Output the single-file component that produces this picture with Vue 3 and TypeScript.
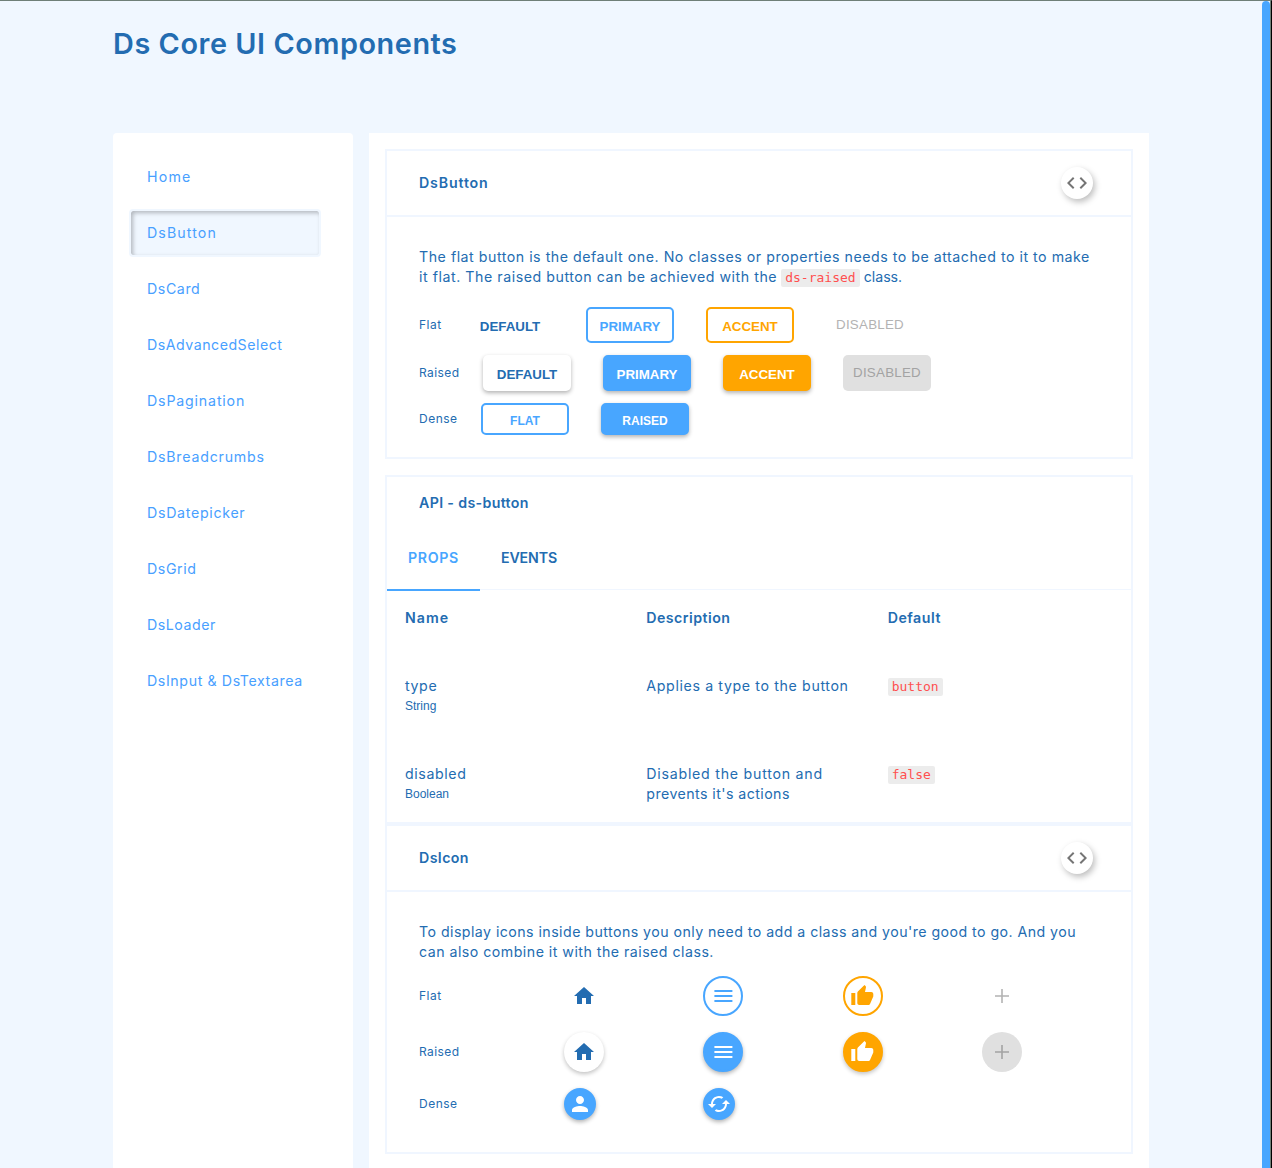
<script setup lang="ts">
interface ButtonSpec { label: string; kind: string }
interface ButtonRow { name: string; mode: string; buttons: ButtonSpec[] }
interface IconSpec { icon: string; kind: string }
interface IconRow { name: string; mode: string; items: IconSpec[] }

const nav: { label: string; cls: string }[] = [
  { label: 'Home', cls: 'n1' },
  { label: 'DsButton', cls: 'n2 active' },
  { label: 'DsCard', cls: 'n3' },
  { label: 'DsAdvancedSelect', cls: 'n4' },
  { label: 'DsPagination', cls: 'n5' },
  { label: 'DsBreadcrumbs', cls: 'n6' },
  { label: 'DsDatepicker', cls: 'n7' },
  { label: 'DsGrid', cls: 'n8' },
  { label: 'DsLoader', cls: 'n9' },
  { label: 'DsInput & DsTextarea', cls: 'n10' },
]

const buttonRows: ButtonRow[] = [
  {
    name: 'Flat', mode: 'flat',
    buttons: [
      { label: 'Default', kind: 'default' },
      { label: 'Primary', kind: 'primary' },
      { label: 'Accent', kind: 'accent' },
      { label: 'Disabled', kind: 'disabled' },
    ],
  },
  {
    name: 'Raised', mode: 'raised',
    buttons: [
      { label: 'Default', kind: 'default' },
      { label: 'Primary', kind: 'primary' },
      { label: 'Accent', kind: 'accent' },
      { label: 'Disabled', kind: 'disabled' },
    ],
  },
  {
    name: 'Dense', mode: 'dense',
    buttons: [
      { label: 'Flat', kind: 'primary flat' },
      { label: 'Raised', kind: 'primary raised' },
    ],
  },
]

const icons: Record<string, string> = {
  code: 'M9.4 16.6L4.8 12l4.6-4.6L8 6l-6 6 6 6 1.4-1.4zm5.2 0l4.6-4.6-4.6-4.6L16 6l6 6-6 6-1.4-1.4z',
  home: 'M10 20v-6h4v6h5v-8h3L12 3 2 12h3v8z',
  menu: 'M3 18h18v-2H3v2zm0-5h18v-2H3v2zm0-7v2h18V6H3z',
  thumb: 'M1 21h4V9H1v12zm22-11c0-1.1-.9-2-2-2h-6.31l.95-4.57.03-.32c0-.41-.17-.79-.44-1.06L14.17 1 7.59 7.59C7.22 7.95 7 8.45 7 9v10c0 1.1.9 2 2 2h9c.83 0 1.54-.5 1.84-1.22l3.02-7.05c.09-.23.14-.47.14-.73v-2z',
  add: 'M19 12.8h-6.2V19h-1.6v-6.2H5v-1.6h6.2V5h1.6v6.2H19z',
  person: 'M12 12c2.21 0 4-1.79 4-4s-1.79-4-4-4-4 1.79-4 4 1.79 4 4 4zm0 2c-2.67 0-8 1.34-8 4v2h16v-2c0-2.66-5.33-4-8-4z',
  cached: 'M19 8l-4 4h3c0 3.31-2.69 6-6 6-1.01 0-1.97-.25-2.8-.7l-1.46 1.46C8.97 19.54 10.43 20 12 20c4.42 0 8-3.58 8-8h3l-4-4zM6 12c0-3.31 2.69-6 6-6 1.01 0 1.97.25 2.8.7l1.46-1.46C15.03 4.46 13.57 4 12 4c-4.42 0-8 3.58-8 8H1l4 4 4-4H6z',
}

const iconRows: IconRow[] = [
  {
    name: 'Flat', mode: 'flat',
    items: [
      { icon: 'home', kind: 'default' },
      { icon: 'menu', kind: 'primary' },
      { icon: 'thumb', kind: 'accent' },
      { icon: 'add', kind: 'disabled' },
    ],
  },
  {
    name: 'Raised', mode: 'raised',
    items: [
      { icon: 'home', kind: 'default' },
      { icon: 'menu', kind: 'primary' },
      { icon: 'thumb', kind: 'accent' },
      { icon: 'add', kind: 'disabled' },
    ],
  },
  {
    name: 'Dense', mode: 'dense',
    items: [
      { icon: 'person', kind: 'primary raised' },
      { icon: 'cached', kind: 'primary raised' },
    ],
  },
]
</script>

<template>
  <div class="page">
    <div class="view">
      <h1><span>Ds Core UI Components</span></h1>
      <div class="columns">
        <nav class="sidebar">
          <a v-for="n in nav" :key="n.label" class="nav-item" :class="n.cls">{{ n.label }}</a>
        </nav>
        <main class="content">
          <section class="card">
            <header class="card-head">
              <h2 class="h-button">DsButton</h2>
              <button class="code-btn"><svg viewBox="0 0 24 24"><path :d="icons.code" /></svg></button>
            </header>
            <div class="card-body">
              <p>
                <span class="l1">The flat button is the default one. No classes or properties needs to be attached to it to make</span><br>
                <span class="l2">it flat. The raised button can be achieved with the</span> <code>ds-raised</code> <span class="l2b">class.</span>
              </p>
              <div v-for="r in buttonRows" :key="r.name" class="btn-row" :class="r.mode">
                <span class="row-label">{{ r.name }}</span>
                <button v-for="b in r.buttons" :key="b.label" class="btn" :class="b.kind">{{ b.label }}</button>
              </div>
            </div>
          </section>

          <section class="card api">
            <h2 class="h-api">API - ds-button</h2>
            <div class="tabs">
              <div class="tab on"><span>PROPS</span></div>
              <div class="tab t-events"><span>EVENTS</span></div>
            </div>
            <div class="table">
              <div class="tr th">
                <div><span class="h-name">Name</span></div>
                <div><span class="h-desc">Description</span></div>
                <div><span class="h-def">Default</span></div>
              </div>
              <div class="tr">
                <div><span class="c-type">type</span><small>String</small></div>
                <div><span class="c-applies">Applies a type to the button</span></div>
                <div><code>button</code></div>
              </div>
              <div class="tr">
                <div><span class="c-dis">disabled</span><small>Boolean</small></div>
                <div><span class="c-d1">Disabled the button and</span><br><span class="c-d2">prevents it's actions</span></div>
                <div><code>false</code></div>
              </div>
            </div>
          </section>

          <section class="card">
            <header class="card-head">
              <h2 class="h-icon">DsIcon</h2>
              <button class="code-btn"><svg viewBox="0 0 24 24"><path :d="icons.code" /></svg></button>
            </header>
            <div class="card-body icons-body">
              <p>
                <span class="l3">To display icons inside buttons you only need to add a class and you're good to go. And you</span><br>
                <span class="l4">can also combine it with the raised class.</span>
              </p>
              <div v-for="r in iconRows" :key="r.name" class="icon-row" :class="r.mode">
                <span class="row-label">{{ r.name }}</span>
                <div v-for="i in r.items" :key="i.icon" class="cell">
                  <button class="ibtn" :class="i.kind">
                    <svg viewBox="0 0 24 24" :class="'i-' + i.icon"><path :d="icons[i.icon]" /></svg>
                  </button>
                </div>
              </div>
            </div>
          </section>
        </main>
      </div>
    </div>
    <div class="scrollbar"><div class="thumb"></div></div>
  </div>
</template>

<style>
body { margin: 0; overflow: hidden; }
</style>

<style scoped>
* { box-sizing: border-box; }
.page {
  display: flex;
  width: 1272px;
  height: 1168px;
  overflow: hidden;
  background: #f0f7ff;
  border-top: 1px solid #6f7f78;
  border-right: 1px solid #000;
  font-family: Inter, "Open Sans", sans-serif;
  font-size: 14.2px;
  line-height: 20px;
  color: #236cb1;
}
.view { width: 1262px; padding: 0 113px; flex: none; }
.scrollbar { width: 9px; flex: none; border-right: 1px solid #6f7f78; }
.thumb { height: 1180px; border-radius: 4px; background: #48a6ff; }
h1 {
  margin: 0;
  height: 132px;
  padding-top: 22px;
  font-size: 28.8px;
  line-height: 41px;
  font-weight: 600;
  letter-spacing: .58px;
  white-space: nowrap;
}
.columns { display: flex; gap: 16px; height: 1035px; }
.sidebar {
  flex: none;
  width: 240px;
  padding: 20px 16px;
  background: #fff;
  border-radius: 4px 4px 0 0;
  display: flex;
  flex-direction: column;
  gap: 8px;
}
.nav-item {
  width: 192px;
  height: 48px;
  flex: none;
  padding: 0 16px;
  border: 2px solid transparent;
  border-radius: 4px;
  line-height: 44px;
  color: #48a0ff;
  white-space: nowrap;
}
.nav-item.active {
  background: #f0f7ff;
  border-color: #f0f7ff;
  box-shadow: inset 2px 2px 4px rgba(0, 0, 0, .26);
}
.n1 { letter-spacing: 1.2px; }
.n2 { letter-spacing: 1.1px; }
.n3 { letter-spacing: .58px; }
.n4 { letter-spacing: .5px; }
.n5 { letter-spacing: .83px; }
.n6 { letter-spacing: .78px; }
.n7 { letter-spacing: .7px; }
.n8 { letter-spacing: .6px; }
.n9 { letter-spacing: .54px; }
.n10 { letter-spacing: .61px; }
.h-button { letter-spacing: .85px; }
.h-api { letter-spacing: .34px; }
.h-icon { letter-spacing: .4px; }
.h-name { letter-spacing: 1px; }
.h-desc { letter-spacing: .45px; }
.h-def { letter-spacing: .52px; }
.l1 { letter-spacing: .52px; }
.l2 { letter-spacing: .54px; }
.l2b { letter-spacing: 0; }
.l3 { letter-spacing: .445px; }
.l4 { letter-spacing: .475px; }
.c-type { letter-spacing: .6px; }
.c-dis { letter-spacing: .6px; }
.c-applies { letter-spacing: .63px; }
.c-d1 { letter-spacing: .75px; }
.c-d2 { letter-spacing: .43px; }

.content { flex: none; width: 780px; padding: 16px; background: #fff; }
.card { border: 2px solid #f0f6ff; background: #fff; }
.card h2 { margin: 0; font-size: 14.2px; line-height: 20px; font-weight: 600; white-space: nowrap; }
.card-head {
  height: 66px;
  padding: 0 38px 0 32px;
  border-bottom: 2px solid #f0f6ff;
  display: flex;
  align-items: center;
  justify-content: space-between;
}
.code-btn {
  width: 32px;
  height: 32px;
  padding: 4px;
  border: 0;
  border-radius: 50%;
  background: #fff;
  box-shadow: 2px 3px 6px rgba(0, 0, 0, .26);
  fill: #757575;
}
svg { display: block; width: 24px; height: 24px; }
.card-body { padding: 30px 32px 22px; }
p { margin: 0 0 20px; white-space: nowrap; }
code {
  padding: 1px 4px 2px;
  border-radius: 2px;
  background: #ececec;
  color: #ff4f4f;
  font: 13px/15px "DejaVu Sans Mono", monospace;
}
.btn-row { display: flex; height: 36px; margin-bottom: 12px; align-items: center; }
.btn-row.dense { height: 32px; margin-bottom: 0; }
.row-label { flex: none; font-size: 12px; line-height: 20px; }
.flat .row-label { width: 47px; letter-spacing: .5px; }
.raised .row-label { width: 64px; letter-spacing: .4px; }
.dense .row-label { width: 62px; letter-spacing: .5px; }
.btn {
  width: 88px;
  height: 36px;
  margin-right: 32px;
  padding: 2px 0 0;
  border: 2px solid transparent;
  border-radius: 5px;
  background: none;
  font: bold 13.33px/32px "Liberation Sans", sans-serif;
  text-transform: uppercase;
  color: #236cb1;
}
.btn.primary { color: #48a6ff; border-color: #48a6ff; }
.btn.accent { color: #ffa500; border-color: #ffa500; }
.btn.disabled { font-weight: normal; color: #b3b3b3; padding: 0; line-height: 30px; letter-spacing: .25px; }
.raised .btn { box-shadow: 0 2px 4px rgba(0, 0, 0, .3); }
.raised .btn.primary, .btn.raised { background: #48a6ff; color: #fff; box-shadow: 0 2px 4px rgba(0, 0, 0, .3); }
.raised .btn.accent { background: #ffa500; color: #fff; }
.raised .btn.disabled { background: #e0e0e0; color: #a3a3a3; box-shadow: none; }
.dense .btn { height: 32px; font-size: 12px; line-height: 26px; padding-top: 3px; }

.api { margin-top: 16px; height: 349px; padding-top: 16px; }
.api h2 { margin-left: 32px; }
.tabs { display: flex; height: 78px; padding-top: 12px; }
.tab {
  width: 93px;
  border-bottom: 1px solid #f0f6ff;
  padding-left: 21px;
  line-height: 66px;
  height: 65px;
  font-weight: 600;
  letter-spacing: -.15px;
}
.tab.on { color: #48a6ff; height: 66px; border-bottom: 2px solid #48a6ff; letter-spacing: .62px; }
.tab.t-events { flex: 1; }
.table { padding-left: 18px; }
.tr { display: grid; grid-template-columns: repeat(3, 241.33px); height: 88px; padding-top: 5px; white-space: nowrap; }
.tr.th { height: 80px; padding-top: 17px; font-weight: 600; }
.tr small { display: block; font: 12px/20px "Liberation Sans", sans-serif; }

.icons-body { padding-bottom: 32px; }
.icons-body p { margin-bottom: 14px; }
.icon-row { display: grid; grid-template-columns: 145px repeat(4, 139.4px); align-items: center; height: 40px; margin-bottom: 16px; }
.icon-row.dense { height: 32px; margin-bottom: 0; }
.ibtn {
  display: flex;
  align-items: center;
  justify-content: center;
  width: 40px;
  height: 40px;
  padding: 0;
  border: 2px solid transparent;
  border-radius: 50%;
  background: none;
  fill: #236cb1;
}
.ibtn.primary { border-color: #48a6ff; fill: #48a6ff; }
.ibtn.accent { border-color: #ffa500; fill: #ffa500; }
.ibtn.disabled { fill: #b3b3b3; }
.raised .ibtn { box-shadow: 0 2px 4px rgba(0, 0, 0, .24); }
.raised .ibtn.primary, .ibtn.raised { background: #48a6ff; fill: #fff; box-shadow: 0 2px 4px rgba(0, 0, 0, .3); }
.raised .ibtn.accent { background: #ffa500; fill: #fff; }
.raised .ibtn.disabled { background: #e0e0e0; fill: #a3a3a3; box-shadow: none; }
.dense .ibtn { width: 32px; height: 32px; }
.i-thumb { transform: translateX(-.7px); }
.i-menu { transform: translateX(.4px); }
</style>
